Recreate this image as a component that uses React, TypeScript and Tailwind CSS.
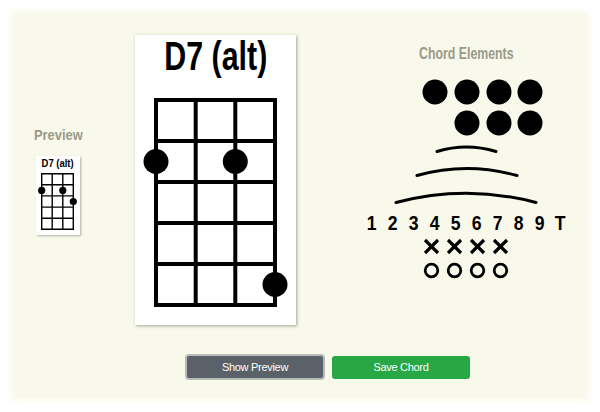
import React from "react";

type Dot = { x: number; y: number };

function Grid({
  xs,
  ys,
  stroke,
  r,
  dots,
  w,
  h,
}: {
  xs: number[];
  ys: number[];
  stroke: number;
  r: number;
  dots: Dot[];
  w: number;
  h: number;
}) {
  const x0 = xs[0];
  const x1 = xs[xs.length - 1];
  const y0 = ys[0];
  const y1 = ys[ys.length - 1];
  return (
    <svg width={w} height={h} viewBox={`0 0 ${w} ${h}`} className="block">
      {xs.map((x, i) => (
        <line key={"v" + i} x1={x} y1={y0 - stroke / 2} x2={x} y2={y1 + stroke / 2} stroke="#000" strokeWidth={stroke} />
      ))}
      {ys.map((y, i) => (
        <line key={"h" + i} x1={x0 - stroke / 2} y1={y} x2={x1 + stroke / 2} y2={y} stroke="#000" strokeWidth={stroke} />
      ))}
      {dots.map((d, i) => (
        <circle key={"d" + i} cx={d.x} cy={d.y} r={r} fill="#000" />
      ))}
    </svg>
  );
}

function XMark() {
  return (
    <svg width="17" height="17" viewBox="0 0 17 17" className="block">
      <line x1="2" y1="2" x2="15" y2="15" stroke="#000" strokeWidth="3.2" />
      <line x1="15" y1="2" x2="2" y2="15" stroke="#000" strokeWidth="3.2" />
    </svg>
  );
}

function OMark() {
  return (
    <svg width="17" height="17" viewBox="0 0 17 17" className="block">
      <circle cx="8.5" cy="8.5" r="6.3" fill="none" stroke="#000" strokeWidth="2.8" />
    </svg>
  );
}

export default function App() {
  const nums = ["1", "2", "3", "4", "5", "6", "7", "8", "9", "T"];
  return (
    <div className="w-[600px] h-[412px] bg-white p-[14px] font-['Liberation_Sans',Arial,sans-serif]">
      <div className="w-[572px] h-[384px] bg-[#f9f9eb] shadow-[0_0_6px_3px_#f9f9eb] flex flex-col">
        <div className="flex h-[311px]">
          {/* Left column: preview */}
          <div className="w-[121px] pt-[113px] pl-[20px] flex flex-col">
            <div className="h-[15px] leading-[15px] text-[15px] font-bold text-[#9a9a88] whitespace-nowrap">
              <span className="inline-block origin-left [transform:scaleX(0.86)]">Preview</span>
            </div>
            <div className="mt-[14px] ml-[2px] w-[44px] h-[79px] bg-white shadow-[1px_1px_2px_rgba(0,0,0,0.3)] flex flex-col">
              <div className="h-[14px] pt-[2px] flex justify-center text-[11px] leading-[11px] font-bold text-black whitespace-nowrap">
                <span className="inline-block [transform:scaleX(0.86)]">D7 (alt)</span>
              </div>
              <Grid
                w={44}
                h={65}
                xs={[5.7, 16.2, 26.8, 37.3]}
                ys={[3.7, 14.8, 25.9, 37.1, 48.2, 59.3]}
                stroke={1.4}
                r={3.6}
                dots={[
                  { x: 5.7, y: 20.4 },
                  { x: 26.8, y: 20.4 },
                  { x: 37.3, y: 31.5 },
                ]}
              />
            </div>
          </div>

          {/* Center: main chord card */}
          <div className="mt-[21px] w-[161px] h-[290px] bg-white shadow-[1px_1px_3px_rgba(0,0,0,0.35)] flex flex-col">
            <div className="h-[41px] pt-[1px] flex justify-center text-[40px] leading-[40px] font-bold text-black whitespace-nowrap">
              <span className="inline-block [transform:scaleX(0.76)]">D7 (alt)</span>
            </div>
            <Grid
              w={161}
              h={249}
              xs={[21, 60.7, 100.3, 140]}
              ys={[24, 65, 106, 147, 188, 229]}
              stroke={4}
              r={12.5}
              dots={[
                { x: 21, y: 85.5 },
                { x: 100.3, y: 85.5 },
                { x: 140, y: 208.5 },
              ]}
            />
          </div>

          {/* Right column: chord elements */}
          <div className="w-[290px] pl-[50px] pt-[32px] flex flex-col">
            <div className="w-[240px] h-[16px] flex justify-center text-[16px] leading-[16px] font-bold text-[#9a9a88] whitespace-nowrap">
              <span className="inline-block [transform:scaleX(0.77)]">Chord Elements</span>
            </div>
            <svg width="240" height="148" viewBox="0 0 240 148" className="block">
              {[89, 121, 153, 184].map((x) => (
                <circle key={"a" + x} cx={x} cy={30} r={12.5} fill="#000" />
              ))}
              {[121, 153, 184].map((x) => (
                <circle key={"b" + x} cx={x} cy={61} r={12.5} fill="#000" />
              ))}
              <path d="M 91 89.5 Q 120.5 80.5 150 89.5" fill="none" stroke="#000" strokeWidth="3" strokeLinecap="round" />
              <path d="M 71 113.5 Q 121 99.5 171 113.5" fill="none" stroke="#000" strokeWidth="3" strokeLinecap="round" />
              <path d="M 50 140.5 Q 120 122 190 140.5" fill="none" stroke="#000" strokeWidth="3" strokeLinecap="round" />
            </svg>
            <div className="mt-[3px] w-[240px] h-[20px] flex justify-center text-[20px] leading-[20px] font-bold text-black">
              {nums.map((n) => (
                <div key={n} className="w-[21px] text-center">
                  <span className="inline-block [transform:scaleX(0.88)]">{n}</span>
                </div>
              ))}
            </div>
            <div className="mt-[1px] w-[240px] h-[24px] flex justify-center items-center">
              {[0, 1, 2, 3].map((i) => (
                <div key={i} className="w-[23px] flex justify-center">
                  <XMark />
                </div>
              ))}
            </div>
            <div className="w-[240px] h-[24px] flex justify-center items-center">
              {[0, 1, 2, 3].map((i) => (
                <div key={i} className="w-[23px] flex justify-center">
                  <OMark />
                </div>
              ))}
            </div>
          </div>
        </div>

        {/* Buttons */}
        <div className="mt-[29px] pl-[171px] flex items-center gap-[7px]">
          <button className="w-[140px] h-[26px] rounded-[4px] border-2 border-[#b8bcb8] bg-[#5a6168] text-white text-[11px] tracking-[-0.3px] flex items-center justify-center">
            Show Preview
          </button>
          <button className="w-[138px] h-[23px] rounded-[3px] bg-[#28a745] text-white text-[11px] tracking-[-0.3px] flex items-center justify-center">
            Save Chord
          </button>
        </div>
      </div>
    </div>
  );
}
